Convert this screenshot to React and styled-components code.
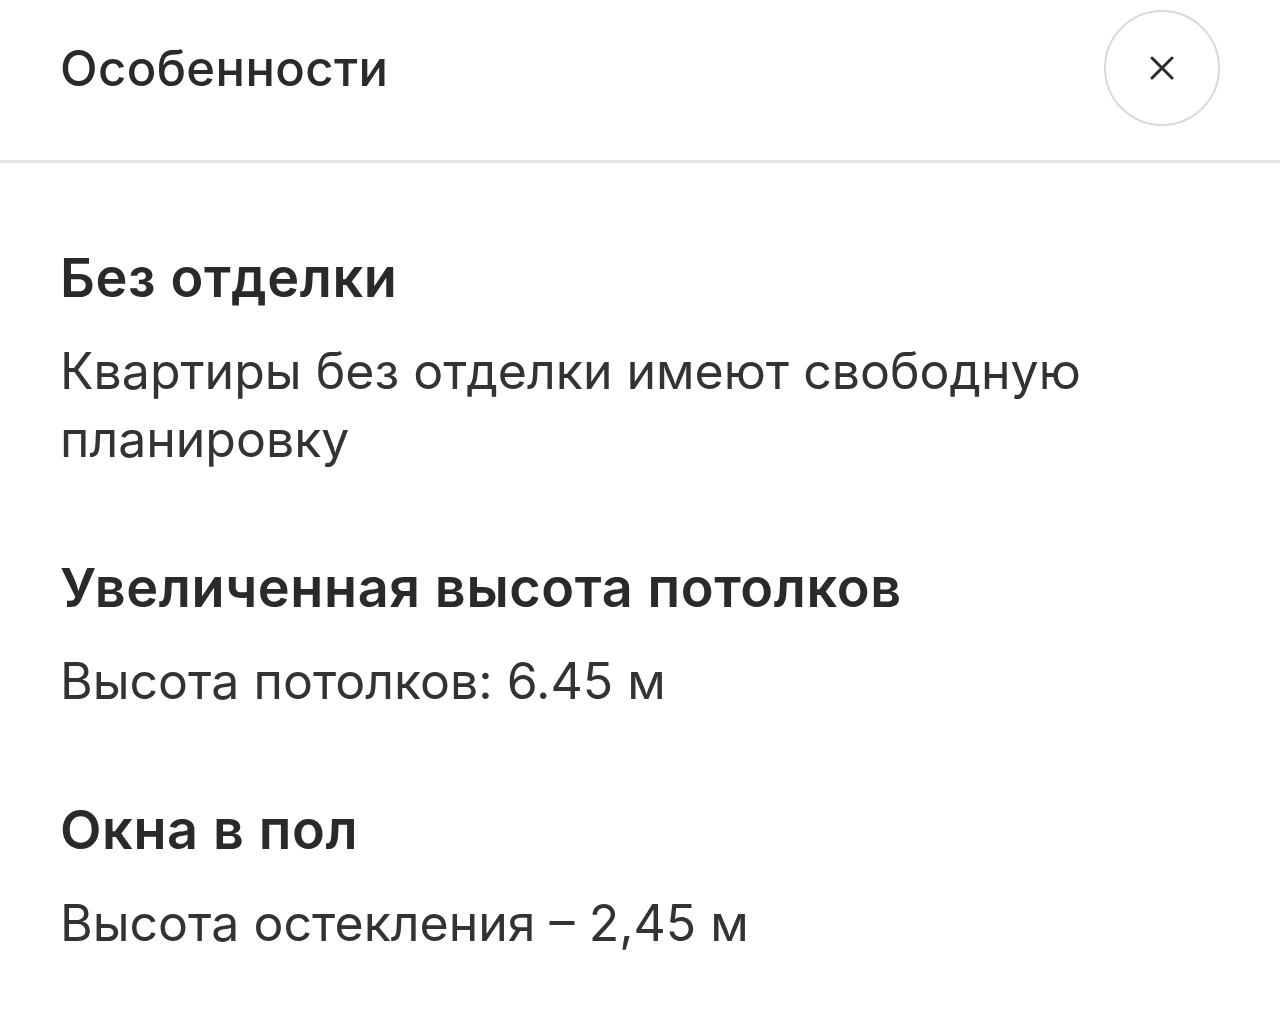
import React from 'react'
import styled, { createGlobalStyle } from 'styled-components'

const GlobalStyle = createGlobalStyle`
  html, body {
    margin: 0;
    padding: 0;
    background: #ffffff;
  }
  body {
    font-family: Inter, "Noto Sans", sans-serif;
    color: #2a2a2a;
  }
`

const features = [
  { title: 'Без отделки', text: 'Квартиры без отделки имеют свободную планировку' },
  { title: 'Увеличенная высота потолков', text: 'Высота потолков: 6.45 м' },
  { title: 'Окна в пол', text: 'Высота остекления – 2,45 м' },
]

export default function App() {
  return (
    <>
      <GlobalStyle />
      <Sheet>
        <Header>
          <Title>Особенности</Title>
          <CloseButton aria-label="Закрыть">
            <svg width="24" height="24" viewBox="0 0 24 24" fill="none">
              <path d="M2 2L22 22M22 2L2 22" stroke="#2a2a2a" strokeWidth="3" strokeLinecap="round" />
            </svg>
          </CloseButton>
        </Header>
        <List>
          {features.map(f => (
            <Feature key={f.title}>
              <FeatureTitle>{f.title}</FeatureTitle>
              <FeatureText>{f.text}</FeatureText>
            </Feature>
          ))}
        </List>
      </Sheet>
    </>
  )
}

const Sheet = styled.div`
  width: 1280px;
  min-height: 1014px;
  background: #fff;
`

const Header = styled.header`
  display: flex;
  align-items: center;
  justify-content: space-between;
  padding: 10px 60px 34px 60px;
  border-bottom: 3px solid #e6e6e6;
`

const Title = styled.h1`
  margin: 0;
  font-size: 49px;
  font-weight: 500;
  letter-spacing: 0.4px;
`

const CloseButton = styled.button`
  width: 116px;
  height: 116px;
  border-radius: 50%;
  border: 2px solid #dadada;
  background: #fff;
  display: flex;
  align-items: center;
  justify-content: center;
  padding: 0;
`

const List = styled.div`
  display: flex;
  flex-direction: column;
  gap: 85px;
  padding: 85px 60px 0;
`

const Feature = styled.section`
  display: flex;
  flex-direction: column;
  gap: 29px;
`

const FeatureTitle = styled.h2`
  margin: 0;
  font-size: 54px;
  font-weight: 600;
  line-height: 60px;
  letter-spacing: 0.6px;
`

const FeatureText = styled.p`
  margin: 0;
  max-width: 1100px;
  font-size: 50px;
  font-weight: 400;
  line-height: 68px;
  color: #333;
`
